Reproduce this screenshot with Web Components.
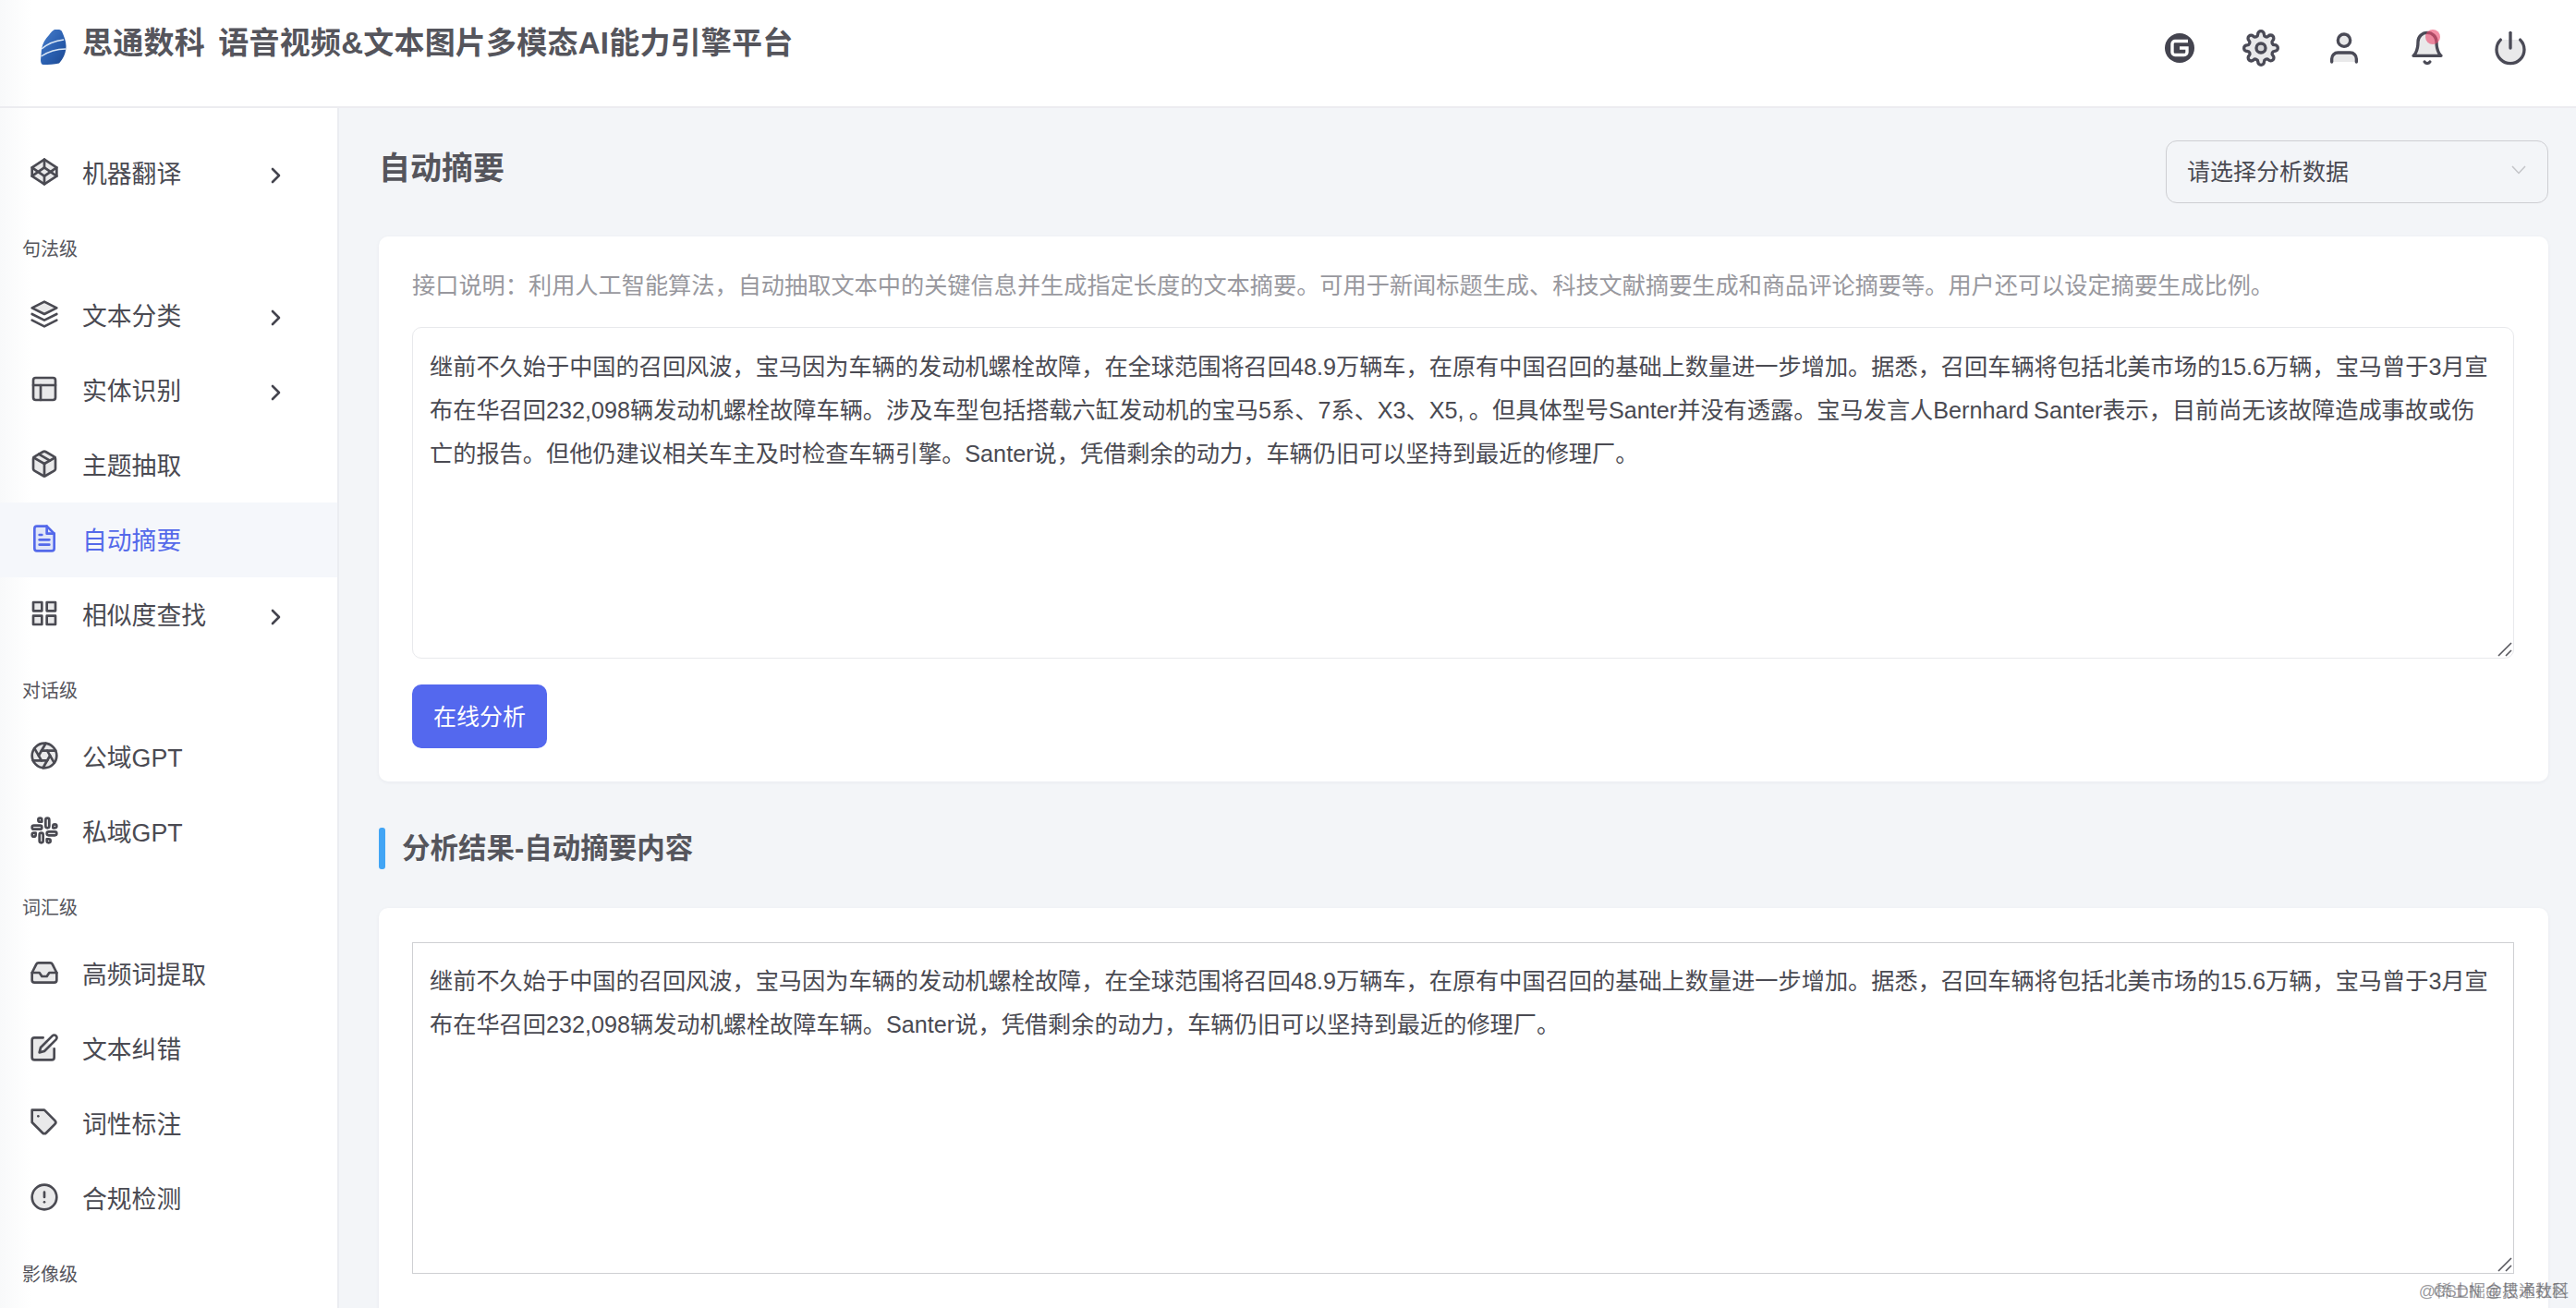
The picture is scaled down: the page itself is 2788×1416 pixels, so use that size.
<!DOCTYPE html>
<html lang="zh"><head><meta charset="utf-8"><title>自动摘要</title>
<style>
html,body{margin:0;padding:0;height:100%;overflow:hidden;background:#f3f5f8;font-family:"Liberation Sans","Noto Sans CJK SC",sans-serif;color:#4a4a52}
</style></head><body>
<app-shell>
  <top-bar slot="top">思通数科 语音视频&amp;文本图片多模态AI能力引擎平台</top-bar>
  <side-nav slot="side">
    <nav-item icon="codepen" more>机器翻译</nav-item>
    <nav-title>句法级</nav-title>
    <nav-item icon="layers" more>文本分类</nav-item>
    <nav-item icon="layout" more>实体识别</nav-item>
    <nav-item icon="package">主题抽取</nav-item>
    <nav-item icon="file" active>自动摘要</nav-item>
    <nav-item icon="grid" more>相似度查找</nav-item>
    <nav-title>对话级</nav-title>
    <nav-item icon="aperture">公域GPT</nav-item>
    <nav-item icon="slack">私域GPT</nav-item>
    <nav-title>词汇级</nav-title>
    <nav-item icon="inbox">高频词提取</nav-item>
    <nav-item icon="edit">文本纠错</nav-item>
    <nav-item icon="tag">词性标注</nav-item>
    <nav-item icon="alert">合规检测</nav-item>
    <nav-title>影像级</nav-title>
  </side-nav>
  <page-head>自动摘要</page-head>
  <text-card>
    <p slot="desc">接口说明：利用人工智能算法，自动抽取文本中的关键信息并生成指定长度的文本摘要。可用于新闻标题生成、科技文献摘要生成和商品评论摘要等。用户还可以设定摘要生成比例。</p>
    <text-box rounded>继前不久始于中国的召回风波，宝马因为车辆的发动机螺栓故障，在全球范围将召回48.9万辆车，在原有中国召回的基础上数量进一步增加。据悉，召回车辆将包括北美市场的15.6万辆，宝马曾于3月宣<br>布在华召回232,098辆发动机螺栓故障车辆。涉及车型包括搭载六缸发动机的宝马5系、7系、X3、X5, 。但具体型号Santer并没有透露。宝马发言人Bernhard Santer表示，目前尚无该故障造成事故或伤<br>亡的报告。但他仍建议相关车主及时检查车辆引擎。Santer说，凭借剩余的动力，车辆仍旧可以坚持到最近的修理厂。</text-box>
    <primary-button>在线分析</primary-button>
  </text-card>
  <section-heading>分析结果-自动摘要内容</section-heading>
  <text-card result>
    <text-box>继前不久始于中国的召回风波，宝马因为车辆的发动机螺栓故障，在全球范围将召回48.9万辆车，在原有中国召回的基础上数量进一步增加。据悉，召回车辆将包括北美市场的15.6万辆，宝马曾于3月宣<br>布在华召回232,098辆发动机螺栓故障车辆。Santer说，凭借剩余的动力，车辆仍旧可以坚持到最近的修理厂。</text-box>
  </text-card>
  <water-mark slot="over"></water-mark>
</app-shell>
<script>
const ICONS={
codepen:'<polygon class="f" points="12 2 22 8.5 22 15.5 12 22 2 15.5 2 8.5 12 2"/><line x1="12" y1="22" x2="12" y2="15.5"/><polyline points="22 8.5 12 15.5 2 8.5"/><polyline points="2 15.5 12 8.5 22 15.5"/><line x1="12" y1="2" x2="12" y2="8.5"/>',
layers:'<polygon class="f" points="12 2 2 7 12 12 22 7 12 2"/><polyline points="2 17 12 22 22 17"/><polyline points="2 12 12 17 22 12"/>',
layout:'<rect class="f" x="3" y="3" width="18" height="18" rx="2"/><line x1="3" y1="9" x2="21" y2="9"/><line x1="9" y1="21" x2="9" y2="9"/>',
package:'<line x1="16.5" y1="9.4" x2="7.5" y2="4.21"/><path class="f" d="M21 16V8a2 2 0 0 0-1-1.73l-7-4a2 2 0 0 0-2 0l-7 4A2 2 0 0 0 3 8v8a2 2 0 0 0 1 1.73l7 4a2 2 0 0 0 2 0l7-4A2 2 0 0 0 21 16z"/><polyline points="3.27 6.96 12 12.01 20.73 6.96"/><line x1="12" y1="22.08" x2="12" y2="12"/>',
file:'<path class="f" d="M14 2H6a2 2 0 0 0-2 2v16a2 2 0 0 0 2 2h12a2 2 0 0 0 2-2V8z"/><polyline points="14 2 14 8 20 8"/><line x1="16" y1="13" x2="8" y2="13"/><line x1="16" y1="17" x2="8" y2="17"/><polyline points="10 9 9 9 8 9"/>',
grid:'<rect class="f" x="3" y="3" width="7" height="7"/><rect class="f" x="14" y="3" width="7" height="7"/><rect class="f" x="14" y="14" width="7" height="7"/><rect class="f" x="3" y="14" width="7" height="7"/>',
aperture:'<circle class="f" cx="12" cy="12" r="10"/><line x1="14.31" y1="8" x2="20.05" y2="17.94"/><line x1="9.69" y1="8" x2="21.17" y2="8"/><line x1="7.38" y1="12" x2="13.12" y2="2.06"/><line x1="9.69" y1="16" x2="3.95" y2="6.06"/><line x1="14.31" y1="16" x2="2.83" y2="16"/><line x1="16.62" y1="12" x2="10.88" y2="21.94"/>',
slack:'<path class="f" d="M14.5 10c-.83 0-1.5-.67-1.5-1.5v-5c0-.83.67-1.5 1.5-1.5s1.5.67 1.5 1.5v5c0 .83-.67 1.5-1.5 1.5z"/><path d="M20.5 10H19V8.5c0-.83.67-1.5 1.5-1.5s1.5.67 1.5 1.5-.67 1.5-1.5 1.5z"/><path class="f" d="M9.5 14c.83 0 1.5.67 1.5 1.5v5c0 .83-.67 1.5-1.5 1.5S8 21.33 8 20.5v-5c0-.83.67-1.5 1.5-1.5z"/><path d="M3.5 14H5v1.5c0 .83-.67 1.5-1.5 1.5S2 16.33 2 15.5 2.67 14 3.5 14z"/><path class="f" d="M14 14.5c0-.83.67-1.5 1.5-1.5h5c.83 0 1.5.67 1.5 1.5s-.67 1.5-1.5 1.5h-5c-.83 0-1.5-.67-1.5-1.5z"/><path d="M15.5 19H14v1.5c0 .83.67 1.5 1.5 1.5s1.5-.67 1.5-1.5-.67-1.5-1.5-1.5z"/><path class="f" d="M10 9.5C10 8.67 9.33 8 8.5 8h-5C2.67 8 2 8.67 2 9.5S2.67 11 3.5 11h5c.83 0 1.5-.67 1.5-1.5z"/><path d="M8.5 5H10V3.5C10 2.67 9.33 2 8.5 2S7 2.67 7 3.5 7.67 5 8.5 5z"/>',
inbox:'<path class="f" d="M5.45 5.11L2 12v6a2 2 0 0 0 2 2h16a2 2 0 0 0 2-2v-6l-3.45-6.89A2 2 0 0 0 16.76 4H7.24a2 2 0 0 0-1.79 1.11z"/><polyline points="22 12 16 12 14 15 10 15 8 12 2 12"/>',
edit:'<path class="f" d="M11 4H4a2 2 0 0 0-2 2v14a2 2 0 0 0 2 2h14a2 2 0 0 0 2-2v-7"/><path d="M18.5 2.5a2.121 2.121 0 0 1 3 3L12 15l-4 1 1-4 9.5-9.5z"/>',
tag:'<path class="f" d="M20.59 13.41l-7.17 7.17a2 2 0 0 1-2.83 0L2 12V2h10l8.59 8.59a2 2 0 0 1 0 2.82z"/><line x1="7" y1="7" x2="7.01" y2="7"/>',
alert:'<circle class="f" cx="12" cy="12" r="10"/><line x1="12" y1="8" x2="12" y2="12"/><line x1="12" y1="16" x2="12.01" y2="16"/>',
settings:'<circle class="f" cx="12" cy="12" r="3"/><path class="f" d="M19.4 15a1.65 1.65 0 0 0 .33 1.82l.06.06a2 2 0 0 1 0 2.83 2 2 0 0 1-2.83 0l-.06-.06a1.65 1.65 0 0 0-1.82-.33 1.65 1.65 0 0 0-1 1.51V21a2 2 0 0 1-2 2 2 2 0 0 1-2-2v-.09A1.65 1.65 0 0 0 9 19.4a1.65 1.65 0 0 0-1.82.33l-.06.06a2 2 0 0 1-2.83 0 2 2 0 0 1 0-2.83l.06-.06a1.65 1.65 0 0 0 .33-1.82 1.65 1.65 0 0 0-1.51-1H3a2 2 0 0 1-2-2 2 2 0 0 1 2-2h.09A1.65 1.65 0 0 0 4.6 9a1.65 1.65 0 0 0-.33-1.82l-.06-.06a2 2 0 0 1 0-2.83 2 2 0 0 1 2.83 0l.06.06a1.65 1.65 0 0 0 1.82.33H9a1.65 1.65 0 0 0 1-1.51V3a2 2 0 0 1 2-2 2 2 0 0 1 2 2v.09a1.65 1.65 0 0 0 1 1.51 1.65 1.65 0 0 0 1.82-.33l.06-.06a2 2 0 0 1 2.83 0 2 2 0 0 1 0 2.83l-.06.06a1.65 1.65 0 0 0-.33 1.82V9a1.65 1.65 0 0 0 1.51 1H21a2 2 0 0 1 2 2 2 2 0 0 1-2 2h-.09a1.65 1.65 0 0 0-1.51 1z"/>',
user:'<path class="f" d="M20 21v-2a4 4 0 0 0-4-4H8a4 4 0 0 0-4 4v2"/><circle class="f" cx="12" cy="7" r="4"/>',
bell:'<path class="f" d="M18 8A6 6 0 0 0 6 8c0 7-3 9-3 9h18s-3-2-3-9"/><path d="M13.73 21a2 2 0 0 1-3.46 0"/>',
power:'<path class="f" d="M18.36 6.64a9 9 0 1 1-12.73 0"/><line x1="12" y1="2" x2="12" y2="12"/>'
};
function define(name,css,html,extra){
  customElements.define(name,class extends HTMLElement{
    constructor(){super();const r=this.attachShadow({mode:'open'});r.innerHTML='<style>'+css+'</style>'+(typeof html==='function'?html(this):html);}
    connectedCallback(){if(extra)extra(this)}
  });
}
define('svg-icon',
 ':host{display:inline-flex;flex:none;width:var(--size,32px);height:var(--size,32px);color:inherit}svg{width:100%;height:100%;fill:none;stroke:currentColor;stroke-width:2;stroke-linecap:round;stroke-linejoin:round}.f{fill:currentColor;fill-opacity:.12}',
 '<svg viewBox="0 0 24 24"></svg>',
 el=>{el.shadowRoot.querySelector('svg').innerHTML=ICONS[el.getAttribute('name')]||''});
define('app-shell',
 ':host{display:grid;grid-template-columns:367px 1fr;grid-template-rows:117px 1fr;width:2788px;height:1416px;overflow:hidden;position:relative;background:#f3f5f8}.top{grid-column:1/3}main{padding:35px 30px 0 43px;overflow:hidden;min-width:0}',
 '<div class="top"><slot name="top"></slot></div><slot name="side"></slot><main><slot></slot></main><slot name="over"></slot>');
define('top-bar',
 ':host{display:flex;box-sizing:border-box;height:117px;align-items:flex-start;justify-content:space-between;background:linear-gradient(90deg,#f8f9fa,#fff 34px);border-bottom:2px solid #ececf0;padding:0 51px 0 44px}.brand{display:flex;align-items:flex-start;gap:17px;margin-top:24px}.logo{width:28px;height:38px;margin-top:8px;flex:none}.t{font-size:33px;line-height:46px;font-weight:700;color:#55555c;white-space:pre;letter-spacing:.22px;word-spacing:5px}.tools{display:flex;gap:50px;margin-top:32px;color:#4a4a56;--size:40px}.bell{position:relative;display:inline-flex}.dot{position:absolute;top:0;right:6px;width:16px;height:16px;border-radius:50%;background:rgba(236,72,110,.62)}.g{width:40px;height:40px;display:block;margin:0 -2px 0 2px}',
 `<div class="brand"><svg class="logo" viewBox="0 0 28 38"><defs><linearGradient id="lg" x1="0" y1="0" x2="1" y2="1"><stop offset="0" stop-color="#4a80cc"/><stop offset=".55" stop-color="#2a5fb0"/><stop offset="1" stop-color="#1b4790"/></linearGradient></defs><path d="M15 0C19-.5 22 0 23 2C25 7 28 13 27.5 19C27 27 24 32 20 36.5C15 38 8 38 3 38C1 38 0 36 0 33L1 21C2 15 5 10 9 6C11 3 13 1 15 0Z" fill="url(#lg)"/><path d="M1 21C8 15 16 12 25 11" fill="none" stroke="#dbe8f6" stroke-width="1.5"/><path d="M.5 29C8 24 17 21 27 21" fill="none" stroke="#dbe8f6" stroke-width="1.5"/></svg><span class="t"><slot></slot></span></div>
 <div class="tools">
  <svg class="g" viewBox="0 0 40 40"><circle cx="20" cy="20" r="16" fill="#44444f"/><path d="M29 12.5H15a3 3 0 0 0-3 3v9a3 3 0 0 0 3 3h10a3 3 0 0 0 3-3v-4.5H20" fill="none" stroke="#fff" stroke-width="3.4"/></svg>
  <svg-icon name="settings"></svg-icon><svg-icon name="user"></svg-icon>
  <span class="bell"><svg-icon name="bell"></svg-icon><span class="dot"></span></span>
  <svg-icon name="power"></svg-icon></div>`);
define('side-nav',
 ':host{display:block;box-sizing:border-box;background:linear-gradient(90deg,#f8f9fa,#fff 34px);border-right:2px solid #ebedf1;padding-top:30px;overflow:hidden;min-height:0}',
 '<slot></slot>');
define('nav-title',
 ':host{display:block;box-sizing:border-box;height:73px;padding:27px 0 0 24px;font-size:20px;line-height:30px;color:#55555c}',
 '<slot></slot>');
define('nav-item',
 ':host{display:flex;align-items:center;box-sizing:border-box;height:81px;padding:0 0 3px 32px;font-size:26.8px;color:#4a4a52;position:relative}:host([active]){background:#f5f7fb;color:#5469ea}.l{margin-left:25px;white-space:nowrap;width:181px}.c{flex:none;width:12px;height:20px;margin:8px 0 0 23px;fill:none;stroke:#44444e;stroke-width:2.6;stroke-linecap:round;stroke-linejoin:round}',
 el=>`<svg-icon name="${el.getAttribute('icon')}"></svg-icon><span class="l"><slot></slot></span>`+(el.hasAttribute('more')?'<svg class="c" viewBox="0 0 12 20"><polyline points="2 3 9 10 2 17"/></svg>':''));
define('page-head',
 ':host{display:flex;justify-content:space-between;align-items:flex-start;height:68px;margin-bottom:36px}.t{font-size:34px;line-height:60px;font-weight:700;color:#55555c}',
 '<span class="t"><slot></slot></span><select-box>请选择分析数据</select-box>');
define('select-box',
 ':host{display:flex;align-items:center;justify-content:space-between;box-sizing:border-box;width:414px;height:68px;border:1.5px solid #cdced2;border-radius:12px;padding:0 22px 5px 22px;font-size:25px;color:#4a4a52}svg{width:18px;height:12px;fill:none;stroke:#c4c5c9;stroke-width:1.5}',
 '<span><slot></slot></span><svg viewBox="0 0 18 12"><polyline points="2 2 9 9.5 16 2"/></svg>');
define('text-card',
 ':host{display:block;box-sizing:border-box;background:#fff;border-radius:10px;padding:30px 37px 36px 36px;box-shadow:0 1px 4px rgba(30,40,70,.05);--pt:19px}:host([result]){padding-top:37px;height:600px;--pt:18px}::slotted(p){margin:0 0 21px;font-size:25.2px;line-height:47px;color:#98989e;white-space:nowrap}',
 '<slot name="desc"></slot><slot></slot>');
define('text-box',
 ':host{display:block;position:relative;box-sizing:border-box;height:359px;border:1.5px solid #cfd0d3;overflow:hidden;padding:var(--pt) 18px 0;font-size:25.2px;line-height:47px;color:#4a4a52;white-space:nowrap;word-spacing:-1.75px}:host([rounded]){border-color:#e8e9ec;border-radius:10px}svg{position:absolute;right:1px;bottom:1px;width:16px;height:16px;stroke:#55555c;stroke-width:1.6;fill:none}',
 '<slot></slot><svg viewBox="0 0 16 16"><line x1="1" y1="15" x2="15" y2="1"/><line x1="9" y1="15" x2="15" y2="9"/></svg>');
define('primary-button',
 ':host{display:inline-flex;align-items:center;justify-content:center;box-sizing:border-box;width:146px;height:69px;margin-top:28px;padding-bottom:3px;border-radius:10px;background:#5468ee;color:#fff;font-size:25px;vertical-align:top}',
 '<slot></slot>');
define('section-heading',
 ':host{display:flex;align-items:center;gap:18px;height:45px;margin:50px 0 42px;font-size:30.5px;font-weight:700;color:#55555c}i{width:7px;height:45px;border-radius:3px;background:#42a5f5}span{margin-top:-5px}',
 '<i></i><span><slot></slot></span>');
define('water-mark',
 ':host{position:absolute;right:8px;bottom:4px;width:162px;height:28px;font-size:18px;line-height:28px;color:rgba(90,90,95,.62);white-space:nowrap}span{position:absolute;right:0;top:0}',
 '<span>@稀土掘金技术社区</span><span>CSDN @思通数科</span>');
</script>
</body></html>
